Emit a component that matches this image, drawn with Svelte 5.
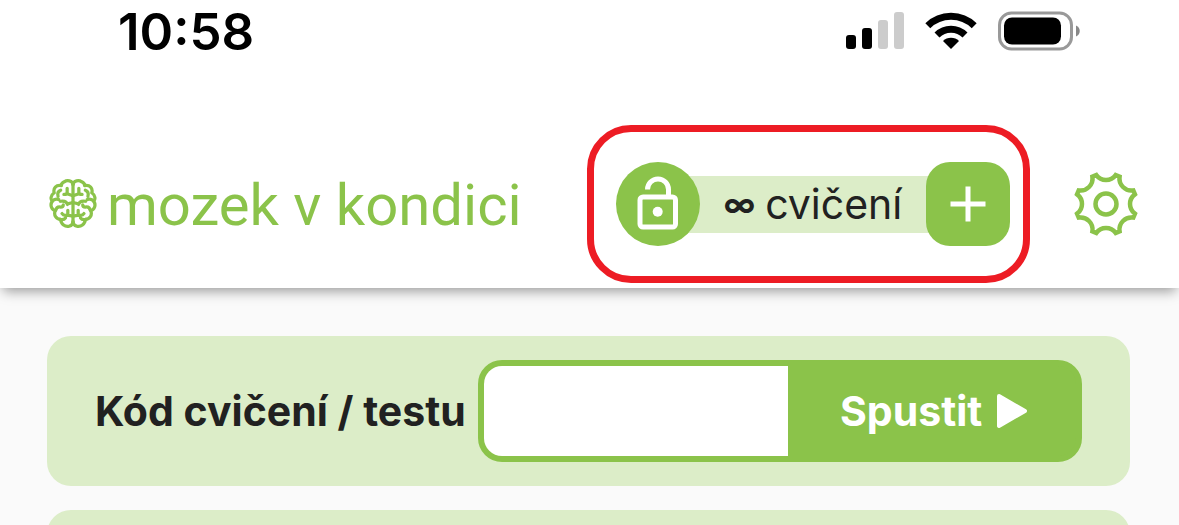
<script lang="ts">
  let code = $state('')

  const bars = [
    { x: 0, height: 14, active: true },
    { x: 16, height: 21, active: true },
    { x: 32, height: 29, active: false },
    { x: 48, height: 37, active: false },
  ]

  function polar(radius: number, degrees: number): string {
    const angle = (degrees * Math.PI) / 180
    return `${(33 + radius * Math.sin(angle)).toFixed(2)} ${(33 - radius * Math.cos(angle)).toFixed(2)}`
  }

  // eight flat teeth joined by concave notches
  function gearPath(): string {
    let d = ''
    for (let i = 0; i < 8; i++) {
      const tooth = i * 45 + 22.5
      d += `${i === 0 ? 'M' : 'L'}${polar(30.5, tooth - 4)}L${polar(30.5, tooth + 4)}`
      d += `A12 12 0 0 0 ${polar(30.5, tooth + 41)}`
    }
    return d + 'Z'
  }
</script>

<div class="page">
  <header>
    <div class="status">
      <time>10:58</time>
      <div class="indicators">
        <svg width="58" height="38" viewBox="0 0 58 38" aria-hidden="true">
          {#each bars as bar}
            <rect
              class:dim={!bar.active}
              x={bar.x}
              y={37 - bar.height}
              width="10"
              height={bar.height}
              rx="3"
            />
          {/each}
        </svg>
        <svg width="52" height="38" viewBox="0 0 52 38" aria-hidden="true">
          <g fill="none" stroke="#000" stroke-width="7">
            <path d="M2.8 13.8a33 33 0 0 1 46.4 0" />
            <path d="M12 23a19.8 19.8 0 0 1 28 0" />
          </g>
          <path d="M26 37l-8-8a11.3 11.3 0 0 1 16 0z" />
        </svg>
        <svg width="82" height="40" viewBox="0 0 82 40" aria-hidden="true">
          <rect x="1.5" y="2" width="72" height="36" rx="12" fill="none" stroke="#999" stroke-width="3" />
          <rect x="6" y="6.5" width="57" height="27" rx="8" />
          <path d="M78 14.5c5 2 5 9 0 11z" fill="#888" />
        </svg>
      </div>
    </div>

    <div class="toolbar">
      <a class="logo" href="/">
        <svg width="48" height="52" viewBox="26 24 148 157" aria-hidden="true">
          <defs>
            <g id="lobe">
              <path d="M100 42C98 30 82 28 73 34C67 37 64 42 64 46C48 43 38 54 42 68C31 76 30 88 36 94C28 106 34 120 45 123C40 137 48 150 62 150C63 165 76 174 88 171C95 169 100 164 100 157" />
              <path d="M82 54V66Q82 73 72 73" />
              <path d="M82 71L100 77" />
              <path d="M62 60Q50 65 54 79" />
              <path d="M36 94Q44 84 56 89" />
              <path d="M61 94Q80 91 83 104M83 102L100 98" />
              <path d="M47 122Q49 110 62 112Q70 112 70 105" />
              <path d="M84 122V136M66 132Q70 139 82 137L100 140" />
              <path d="M60 150Q72 153 77 145" />
            </g>
          </defs>
          <g class="lines">
            <path d="M100 38V165" />
            <use href="#lobe" />
            <use href="#lobe" transform="translate(200 0) scale(-1 1)" />
          </g>
        </svg>
        <span>mozek v kondici</span>
      </a>

      <div class="highlight">
        <div class="credits">
          <button class="lock" type="button" aria-label="Odemknout">
            <svg width="84" height="84" viewBox="0 0 84 84" aria-hidden="true">
              <rect x="24" y="35" width="35.5" height="30" rx="3" />
              <path d="M31.5 27.5a10.5 10.5 0 0 1 21 0V35" />
              <circle cx="41.7" cy="49.7" r="5" />
            </svg>
          </button>
          <span class="amount"><b>∞</b> cvičení</span>
          <button class="add" type="button" aria-label="Přidat">
            <svg width="84" height="84" viewBox="0 0 84 84" aria-hidden="true">
              <path d="M42 24.5v35M24.5 42h35" />
            </svg>
          </button>
        </div>
      </div>

      <button class="settings" type="button" aria-label="Nastavení">
        <svg width="66" height="66" viewBox="0 0 66 66" aria-hidden="true">
          <path d={gearPath()} />
          <circle cx="33" cy="33" r="10.5" />
        </svg>
      </button>
    </div>
  </header>

  <main>
    <form class="card" onsubmit={(event) => event.preventDefault()}>
      <label for="code">Kód cvičení / testu</label>
      <div class="field">
        <input id="code" type="text" bind:value={code} />
        <button type="submit">
          Spustit
          <svg width="32" height="36" viewBox="0 0 32 36" aria-hidden="true">
            <path d="M3 3L29 18L3 33Z" />
          </svg>
        </button>
      </div>
    </form>
    <section class="card"></section>
  </main>
</div>

<style>
  :global(body) {
    margin: 0;
    background: #fafafa;
  }

  .page {
    height: 100vh;
    overflow: hidden;
    background: #fafafa;
    color: #212121;
    font-family: Inter, 'Open Sans', sans-serif;
    font-size: 41px;
  }

  svg {
    display: block;
    flex: none;
  }

  button {
    border: 0;
    padding: 0;
    background: #8bc34a;
    color: #fff;
    font: inherit;
    cursor: pointer;
  }

  header {
    position: relative;
    background: #fff;
    box-shadow: 0 6px 12px -3px rgba(0, 0, 0, 0.4);
  }

  .status {
    display: flex;
    align-items: center;
    justify-content: space-between;
    height: 62px;
    padding: 0 99px 0 118px;
  }

  time {
    color: #000;
    font-size: 51px;
    font-weight: 600;
  }

  .indicators {
    display: flex;
    align-items: center;
    gap: 21px;
  }

  .dim {
    fill: #ccc;
  }

  .toolbar {
    display: flex;
    align-items: center;
    padding: 63px 40px 5px 49px;
  }

  .logo {
    display: flex;
    align-items: center;
    gap: 10px;
    color: #8bc34a;
    font-family: Roboto, sans-serif;
    font-size: 58px;
    line-height: 64px;
    text-decoration: none;
    white-space: nowrap;
  }

  .logo span {
    padding-top: 2px;
  }

  .lines {
    fill: none;
    stroke: #8bc34a;
    stroke-width: 10;
    stroke-linecap: round;
    stroke-linejoin: round;
  }

  .highlight {
    margin-left: auto;
    border: 7px solid #ed1c24;
    border-radius: 44px;
    padding: 30px 13px 30px 22px;
  }

  .credits {
    display: flex;
    align-items: center;
  }

  .lock,
  .add {
    position: relative;
    width: 84px;
    height: 84px;
    border-radius: 24px;
  }

  .lock {
    border-radius: 50%;
  }

  .lock svg,
  .add svg {
    fill: none;
    stroke: #fff;
    stroke-width: 5;
  }

  .lock circle {
    fill: #fff;
    stroke: none;
  }

  .amount {
    display: flex;
    align-items: center;
    justify-content: center;
    gap: 10px;
    box-sizing: border-box;
    width: 274px;
    height: 57px;
    margin: 0 -24px;
    background: #dcedc8;
    white-space: nowrap;
  }

  .amount b {
    font-size: 32px;
    font-weight: 700;
  }

  .settings {
    margin-left: 43px;
    background: none;
  }

  .settings svg {
    fill: none;
    stroke: #8bc34a;
    stroke-width: 4.5;
  }

  main {
    display: grid;
    gap: 24px;
    padding: 48px 49px 48px 47px;
  }

  .card {
    display: flex;
    align-items: center;
    justify-content: space-between;
    min-height: 102px;
    border-radius: 24px;
    padding: 24px 48px;
    background: #dcedc8;
  }

  label {
    font-weight: 700;
    white-space: nowrap;
  }

  .field {
    display: flex;
    box-sizing: border-box;
    width: 604px;
    height: 102px;
    border: 6px solid #8bc34a;
    border-radius: 24px;
    background: #8bc34a;
  }

  input {
    flex: 1;
    min-width: 0;
    border: 0;
    border-radius: 18px 0 0 18px;
    padding: 0 24px;
    background: #fff;
    color: inherit;
    font: inherit;
    outline: none;
  }

  .field button {
    display: flex;
    align-items: center;
    gap: 14px;
    width: 288px;
    padding-left: 52px;
    background: none;
    font-weight: 700;
  }

  .field svg {
    fill: #fff;
    stroke: #fff;
    stroke-width: 4;
    stroke-linejoin: round;
  }
</style>
